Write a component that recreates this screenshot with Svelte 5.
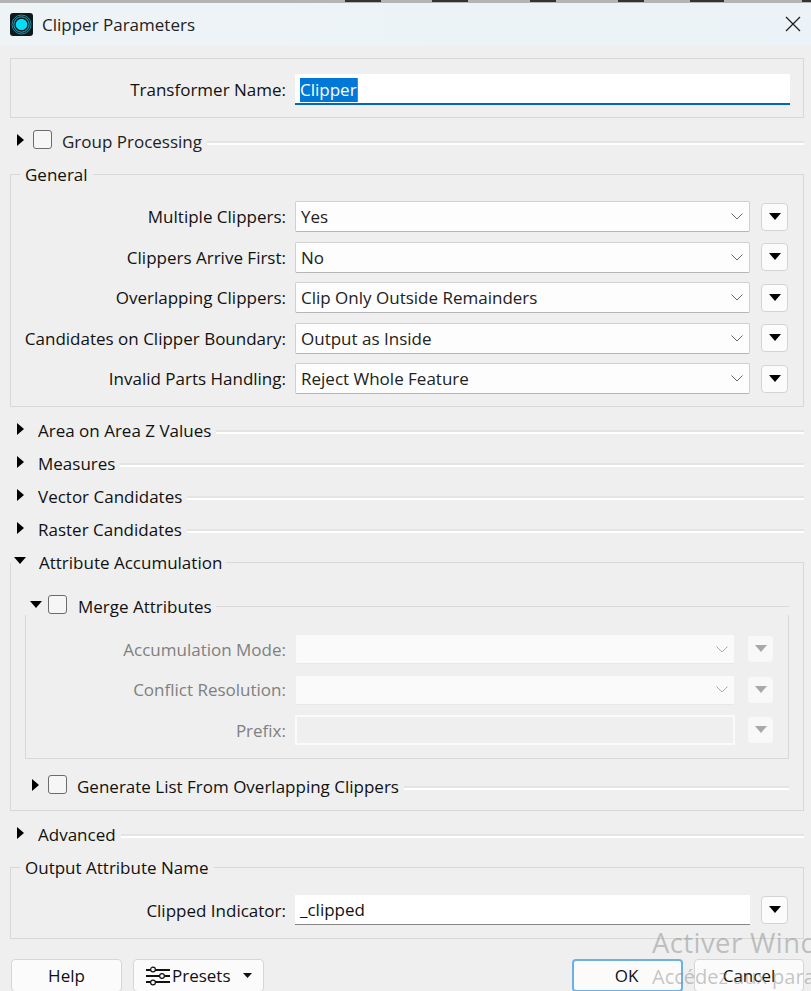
<script>
  const general = [
    ['Multiple Clippers:', 'Yes'],
    ['Clippers Arrive First:', 'No'],
    ['Overlapping Clippers:', 'Clip Only Outside Remainders'],
    ['Candidates on Clipper Boundary:', 'Output as Inside'],
    ['Invalid Parts Handling:', 'Reject Whole Feature']
  ];
  const collapsed = ['Area on Area Z Values', 'Measures', 'Vector Candidates', 'Raster Candidates'];
</script>

{#snippet chevron()}
  <svg class="chev" width="12" height="7" viewBox="0 0 12 7"><path d="M0.5 0.5 L6 6 L11.5 0.5" fill="none" stroke="currentColor" stroke-width="1"/></svg>
{/snippet}
{#snippet tri(open)}
  <svg class="tri" width="12" height="12" viewBox="0 0 12 12">
    {#if open}<path d="M0 2 H12 L6 9 Z"/>{:else}<path d="M2 0 L9 6 L2 12 Z"/>{/if}
  </svg>
{/snippet}
{#snippet menu()}
  <span class="menu"><svg width="12" height="7" viewBox="0 0 12 7"><path d="M0 0 H12 L6 7 Z" fill="currentColor"/></svg></span>
{/snippet}

<div class="window">
  <div class="strip">
    <i style="left:345px;width:36px"></i><i style="left:432px;width:36px"></i><i style="left:530px;width:26px"></i><i style="left:618px;width:26px"></i><i style="left:690px;width:34px"></i><i style="left:802px;width:9px"></i>
  </div>
  <header class="title">
    <svg class="logo" width="23" height="23" viewBox="0 0 23 23">
      <rect width="23" height="23" rx="3" fill="#10181c"/>
      <circle cx="11.5" cy="11.5" r="9.5" fill="none" stroke="#1b8fa6" stroke-width="1"/>
      <circle cx="11.5" cy="11.5" r="7.7" fill="none" stroke="#1fb4cc" stroke-width="1"/>
      <circle cx="11.5" cy="11.5" r="5.8" fill="#08dcf5"/>
    </svg>
    <span class="title-text">Clipper Parameters</span>
    <svg class="close" width="16" height="16" viewBox="0 0 16 16"><path d="M1 1 L15 15 M15 1 L1 15" stroke="#1a1a1a" stroke-width="1.2"/></svg>
  </header>

  <main class="body">
    <section class="box name-box">
      <div class="row">
        <span class="label">Transformer Name:</span>
        <div class="input focus wide"><span class="sel">Clipper</span><span class="caret"></span></div>
      </div>
    </section>

    <div class="head group-head">
      {@render tri(false)}
      <span class="check"></span>
      <span class="head-text muted-dark">Group Processing</span>
      <span class="rule"></span>
    </div>

    <section class="box general">
      <span class="legend">General</span>
      <div class="rows">
        {#each general as [l, v]}
          <div class="row">
            <span class="label">{l}</span>
            <div class="select"><span>{v}</span>{@render chevron()}</div>
            {@render menu()}
          </div>
        {/each}
      </div>
    </section>

    <div class="collapsed">
      {#each collapsed as c}
        <div class="head plain">
          {@render tri(false)}
          <span class="head-text">{c}</span>
          <span class="rule"></span>
        </div>
      {/each}
    </div>

    <section class="accum">
      <div class="accum-head">
        {@render tri(true)}
        <span class="head-text">Attribute Accumulation</span>
        <span class="thin"></span>
      </div>
      <div class="accum-body">
        <div class="merge-head">
          {@render tri(true)}
          <span class="check"></span>
          <span class="head-text">Merge Attributes</span>
          <span class="thin"></span>
        </div>
        <div class="merge-body">
          <div class="row dis">
            <span class="label">Accumulation Mode:</span>
            <div class="select"><span></span>{@render chevron()}</div>
            {@render menu()}
          </div>
          <div class="row dis">
            <span class="label">Conflict Resolution:</span>
            <div class="select"><span></span>{@render chevron()}</div>
            {@render menu()}
          </div>
          <div class="row dis">
            <span class="label">Prefix:</span>
            <div class="select prefix"></div>
            {@render menu()}
          </div>
        </div>
        <div class="gen-head">
          {@render tri(false)}
          <span class="check"></span>
          <span class="head-text">Generate List From Overlapping Clippers</span>
          <span class="rule"></span>
        </div>
      </div>
    </section>

    <div class="head plain advanced">
      {@render tri(false)}
      <span class="head-text">Advanced</span>
      <span class="rule"></span>
    </div>

    <section class="box output">
      <span class="legend">Output Attribute Name</span>
      <div class="row">
        <span class="label">Clipped Indicator:</span>
        <div class="input text"><span>_clipped</span></div>
        {@render menu()}
      </div>
    </section>

    <footer class="buttons">
      <button class="btn help">Help</button>
      <button class="btn presets">
        <svg width="26" height="20" viewBox="0 0 26 20">
          <g stroke="#111" stroke-width="2" fill="#f8f8f8">
            <path d="M1 4 H25 M1 10 H25 M1 16 H25" fill="none"/>
            <circle cx="8" cy="3.5" r="2.4" stroke-width="1.2"/>
            <circle cx="17" cy="10" r="2.4" stroke-width="1.2"/>
            <circle cx="8" cy="16.5" r="2.4" stroke-width="1.2"/>
          </g>
        </svg>
        <span>Presets</span>
        <svg class="mini" width="9" height="5" viewBox="0 0 9 5"><path d="M0 0 H9 L4.5 5 Z" fill="#111"/></svg>
      </button>
      <span class="spacer"></span>
      <button class="btn ok">OK</button>
      <button class="btn cancel">Cancel</button>
    </footer>
  </main>

  <div class="wm wm1">Activer Windows</div>
  <div class="wm wm2">Accédez aux paramètres</div>
</div>

<style>
  :global(body) { margin: 0; background: #efefef; overflow: hidden; }
  .window {
    position: relative;
    width: 811px;
    height: 991px;
    overflow: hidden;
    background: #efefef;
    font-family: "Open Sans", "Noto Sans", sans-serif;
    font-size: 17px;
    letter-spacing: 0;
    color: #111;
  }
  .strip { position: relative; height: 3px; background: #b4b4b4; }
  .strip i { position: absolute; top: 0; height: 2px; background: #333; }
  .title {
    height: 43px;
    display: flex;
    align-items: center;
    padding: 0 0 1px 10px;
    background: linear-gradient(90deg, #eef3f6, #ebf3f8);
    box-sizing: border-box;
  }
  .title-text { margin-left: 9px; font-size: 17px; color: #222; }
  .close { margin-left: auto; margin-right: 10px; }
  .body { padding: 12px 7px 0 10px; }
  .box {
    position: relative;
    border: 1px solid #d8d8d8;
    box-sizing: border-box;
  }
  .legend {
    position: absolute;
    left: 9px;
    top: -12px;
    padding: 0 5px;
    background: #efefef;
    line-height: 24px;
  }
  .row {
    display: flex;
    align-items: center;
  }
  .label { width: 275px; text-align: right; flex: none; white-space: nowrap; }
  .name-box { height: 60px; padding-top: 15px; }
  .input {
    margin-left: 9px;
    height: 30px;
    background: #fff;
    box-sizing: border-box;
    display: flex;
    align-items: center;
    padding-left: 5px;
  }
  .wide { width: 495px; height: 31px; }
  .focus { border-bottom: 2px solid #0067c0; padding-top: 2px; }
  .sel { background: #0078d7; color: #fff; line-height: 24px; }
  .caret { width: 1px; height: 24px; background: #d26a00; }
  .text { width: 455px; border-bottom: 1px solid #858585; }
  .head { display: flex; align-items: center; }
  .tri { flex: none; fill: #000; margin-top: -3px; }
  .check {
    flex: none;
    width: 17px;
    height: 17px;
    border: 1px solid #6c6c6c;
    border-radius: 3px;
    background: #f6f6f6;
    margin-top: -3px;
  }
  .head-text { white-space: nowrap; flex: none; }
  .muted-dark { color: #222; }
  .rule {
    flex: 1;
    border-top: 2px solid #e4e4e4;
    border-bottom: 2px solid #fff;
    box-sizing: border-box;
    height: 4px;
    margin: 3px 0 0 5px;
  }
  .thin { flex: 1; height: 1px; background: #d8d8d8; margin-left: 4px; }
  .group-head { height: 24px; margin-top: 11px; padding-left: 5px; }
  .group-head .check { margin-left: 6px; }
  .group-head .head-text { margin-left: 10px; }
  .general { height: 233px; margin-top: 21px; padding-top: 26px; }
  .rows { display: flex; flex-direction: column; gap: 9.5px; }
  .rows .row { height: 31px; }
  .select {
    margin-left: 9px;
    width: 455px;
    height: 31px;
    box-sizing: border-box;
    background: #fdfdfd;
    border: 1px solid #d0d0d0;
    border-bottom-color: #b5b5b5;
    border-radius: 2px;
    display: flex;
    align-items: center;
    justify-content: space-between;
    padding: 0 6px 0 5px;
    color: #222;
  }
  .chev { color: #666; flex: none; }
  .menu {
    margin-left: 11px;
    width: 27px;
    height: 28px;
    flex: none;
    box-sizing: border-box;
    background: #fbfbfb;
    border: 1px solid #d4d4d4;
    border-radius: 4px;
    display: flex;
    justify-content: center;
    padding-top: 9px;
    color: #000;
  }
  .collapsed { margin-top: 7px; display: flex; flex-direction: column; }
  .plain { height: 33px; padding-left: 5px; }
  .plain .head-text { margin-left: 11px; }
  .accum-head {
    height: 33px;
    display: flex;
    align-items: center;
    padding-left: 4px;
  }
  .accum-head .head-text { margin-left: 13px; }
  .accum-body {
    height: 248px;
    border: 1px solid #d8d8d8;
    border-top: 0;
    margin-top: -16px;
    box-sizing: border-box;
    padding: 37px 14px 0;
    position: relative;
  }
  .merge-head { display: flex; align-items: center; height: 24px; margin-top: -6px; padding-left: 5px; }
  .merge-head .check { margin-left: 6px; }
  .merge-head .head-text { margin-left: 11px; }
  .merge-body {
    height: 144px;
    border: 1px solid #d8d8d8;
    border-top: 0;
    margin-top: -3px;
    box-sizing: border-box;
    padding-top: 19px;
    display: flex;
    flex-direction: column;
    gap: 10.5px;
  }
  .merge-body .label { width: 260px; }
  .dis .label { color: #808080; }
  .dis .select { width: 440px; height: 30px; background: #fafafa; border-color: #efefef; border-bottom-color: #e8e8e8; }
  .dis .chev { color: #aaa; }
  .dis .menu { background: #f8f8f8; border-color: #efefef; color: #a8a8a8; margin-left: 12px; }
  .dis .prefix { border: 2px solid #fafafa; background: #efefef; border-radius: 0; }
  .gen-head { display: flex; align-items: center; height: 24px; margin-top: 15px; padding-left: 5px; }
  .gen-head .check { margin-left: 6px; }
  .gen-head .head-text { margin-left: 10px; }
  .advanced { margin-top: 7px; }
  .output { height: 72px; margin-top: 16px; padding-top: 27px; }
  .buttons {
    display: flex;
    align-items: flex-start;
    margin-top: 20px;
    padding-left: 1px;
  }
  .btn {
    font: inherit;
    letter-spacing: inherit;
    color: #111;
    height: 33px;
    background: #fbfbfb;
    border: 1px solid #d6d6d6;
    border-radius: 4px;
    box-sizing: border-box;
    padding: 0;
  }
  .help { width: 111px; }
  .presets { width: 131px; margin-left: 11px; display: flex; align-items: center; padding-left: 11px; gap: 1px; }
  .mini { margin-left: 11px; }
  .spacer { flex: 1; }
  .ok { width: 111px; border: 2px solid #6cb0e6; padding-right: 2px; }
  .cancel { width: 110px; margin-left: 11px; }
  .wm {
    position: absolute;
    white-space: nowrap;
    color: rgba(120, 120, 120, 0.42);
    pointer-events: none;
  }
  .wm1 { left: 652px; top: 924px; font-size: 27.5px; letter-spacing: 0.4px; }
  .wm2 { left: 652px; top: 963px; font-size: 20px; }
</style>
